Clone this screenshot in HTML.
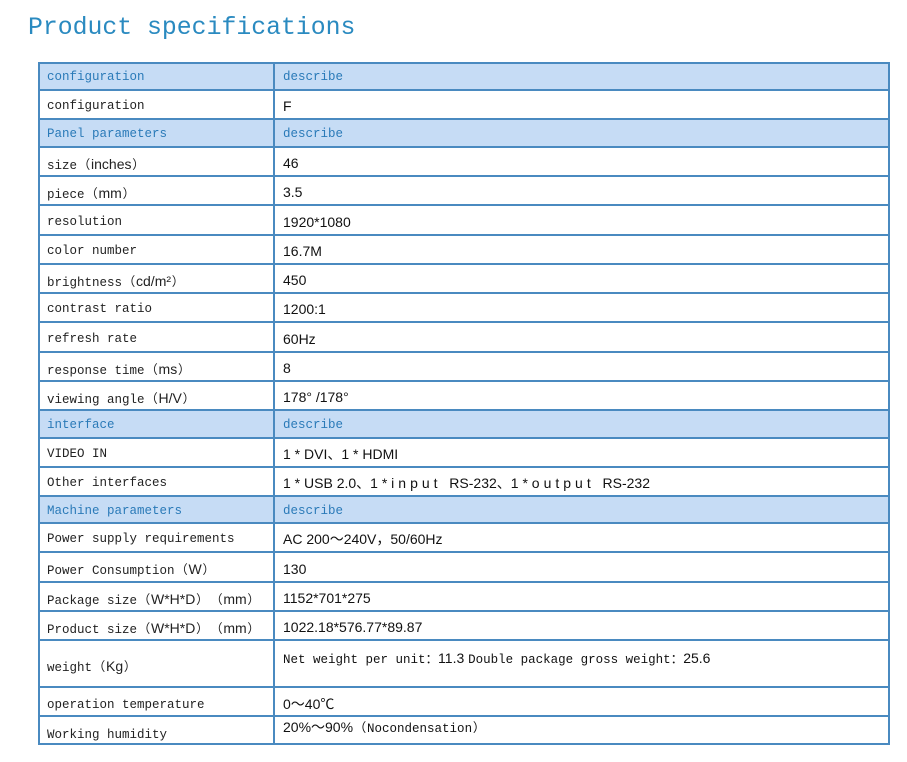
<!DOCTYPE html>
<html><head><meta charset="utf-8"><style>
body{margin:0;width:907px;height:762px;background:#fff;position:relative;overflow:hidden}
h1{position:absolute;left:28px;top:14px;margin:0;font:24.8px "Liberation Mono","Noto Sans CJK SC",monospace;color:#2a8ac0;font-weight:normal;letter-spacing:0}
.r{position:absolute;left:38px;width:852px;box-sizing:border-box}
.c{position:absolute;top:0;bottom:0;display:flex;align-items:center;box-sizing:border-box;white-space:nowrap;padding-top:3px}
.l{left:0;width:236px;padding-left:9px;font:12.5px "Liberation Mono","Noto Sans CJK SC",monospace;color:#222}
.v{left:236px;right:0;padding-left:9px;font:14px "Liberation Sans","Noto Sans CJK SC",sans-serif;color:#111}
.h{background:#c6dcf5}
.h .c{font:12.5px "Liberation Mono","Noto Sans CJK SC",monospace;color:#2a7ab8;padding-top:2px}
.s{font-family:"Liberation Sans","Noto Sans CJK SC",sans-serif;font-size:14px}
.m{font-family:"Liberation Mono","Noto Sans CJK SC",monospace;font-size:12.5px}
.p{display:inline-block;width:14px;text-align:center}
#grid{position:absolute;left:38px;top:62px;width:852px;height:683px;border:2px solid #4a8ac0;box-sizing:border-box;pointer-events:none}
.hl{position:absolute;left:38px;width:852px;height:2px;background:#4a8ac0}
.vl{position:absolute;left:273px;top:62px;width:2px;height:683px;background:#4a8ac0}
</style></head><body>
<h1>Product specifications</h1>

<div class="r h" style="top:62px;height:28px"><div class="c l"><span>configuration</span></div><div class="c v"><span>describe</span></div></div>
<div class="r" style="top:90px;height:29px"><div class="c l"><span>configuration</span></div><div class="c v"><span>F</span></div></div>
<div class="r h" style="top:119px;height:28px"><div class="c l"><span>Panel parameters</span></div><div class="c v"><span>describe</span></div></div>
<div class="r" style="top:147px;height:29px"><div class="c l"><span>size<span class="p">（</span><span class="s">inches</span><span class="p">）</span></span></div><div class="c v"><span>46</span></div></div>
<div class="r" style="top:176px;height:29px"><div class="c l"><span>piece<span class="p">（</span><span class="s">mm</span><span class="p">）</span></span></div><div class="c v"><span>3.5</span></div></div>
<div class="r" style="top:205px;height:30px"><div class="c l"><span>resolution</span></div><div class="c v"><span>1920*1080</span></div></div>
<div class="r" style="top:235px;height:29px"><div class="c l"><span>color number</span></div><div class="c v"><span>16.7M</span></div></div>
<div class="r" style="top:264px;height:29px"><div class="c l"><span>brightness<span class="p">（</span><span class="s">cd/m²</span><span class="p">）</span></span></div><div class="c v"><span>450</span></div></div>
<div class="r" style="top:293px;height:29px"><div class="c l"><span>contrast ratio</span></div><div class="c v"><span>1200:1</span></div></div>
<div class="r" style="top:322px;height:30px"><div class="c l"><span>refresh rate</span></div><div class="c v"><span>60Hz</span></div></div>
<div class="r" style="top:352px;height:29px"><div class="c l"><span>response time<span class="p">（</span><span class="s">ms</span><span class="p">）</span></span></div><div class="c v"><span>8</span></div></div>
<div class="r" style="top:381px;height:29px"><div class="c l"><span>viewing angle<span class="p">（</span><span class="s">H/V</span><span class="p">）</span></span></div><div class="c v"><span>178° /178°</span></div></div>
<div class="r h" style="top:410px;height:28px"><div class="c l"><span>interface</span></div><div class="c v"><span>describe</span></div></div>
<div class="r" style="top:438px;height:29px"><div class="c l"><span>VIDEO IN</span></div><div class="c v"><span>1 * DVI、1 * HDMI</span></div></div>
<div class="r" style="top:467px;height:29px"><div class="c l"><span>Other interfaces</span></div><div class="c v"><span>1 * USB 2.0、1 * <span style="letter-spacing:4px">input</span>&nbsp; RS-232、1 * <span style="letter-spacing:4px">output</span>&nbsp; RS-232</span></div></div>
<div class="r h" style="top:496px;height:27px"><div class="c l"><span>Machine parameters</span></div><div class="c v"><span>describe</span></div></div>
<div class="r" style="top:523px;height:29px"><div class="c l"><span>Power supply requirements</span></div><div class="c v"><span>AC 200～240V，50/60Hz</span></div></div>
<div class="r" style="top:552px;height:30px"><div class="c l"><span>Power Consumption<span class="p">（</span><span class="s">W</span><span class="p">）</span></span></div><div class="c v"><span>130</span></div></div>
<div class="r" style="top:582px;height:29px"><div class="c l"><span>Package size<span class="p">（</span><span class="s">W*H*D</span><span class="p">）</span><span class="p">（</span><span class="s">mm</span><span class="p">）</span></span></div><div class="c v"><span>1152*701*275</span></div></div>
<div class="r" style="top:611px;height:29px"><div class="c l"><span>Product size<span class="p">（</span><span class="s">W*H*D</span><span class="p">）</span><span class="p">（</span><span class="s">mm</span><span class="p">）</span></span></div><div class="c v"><span>1022.18*576.77*89.87</span></div></div>
<div class="r" style="top:640px;height:47px"><div class="c l"><span>weight<span class="p">（</span><span class="s">Kg</span><span class="p">）</span></span></div><div class="c v" style="align-items:flex-start;padding-top:8px"><span><span class="m">Net weight per unit：</span>11.3 <span class="m">Double package gross weight：</span>25.6</span></div></div>
<div class="r" style="top:687px;height:29px"><div class="c l" style="padding-top:7px"><span>operation temperature</span></div><div class="c v" style="padding-top:5px"><span>0～40℃</span></div></div>
<div class="r" style="top:716px;height:29px"><div class="c l" style="padding-top:9px"><span>Working humidity</span></div><div class="c v" style="align-items:flex-start;padding-top:1px"><span>20%～90%<span class="m"><span class="p">（</span>Nocondensation<span class="p">）</span></span></span></div></div>

<div class="vl"></div>
<div class="hl" style="top:89px"></div><div class="hl" style="top:118px"></div><div class="hl" style="top:146px"></div>
<div class="hl" style="top:175px"></div><div class="hl" style="top:204px"></div><div class="hl" style="top:234px"></div>
<div class="hl" style="top:263px"></div><div class="hl" style="top:292px"></div><div class="hl" style="top:321px"></div>
<div class="hl" style="top:351px"></div><div class="hl" style="top:380px"></div><div class="hl" style="top:409px"></div>
<div class="hl" style="top:437px"></div><div class="hl" style="top:466px"></div><div class="hl" style="top:495px"></div>
<div class="hl" style="top:522px"></div><div class="hl" style="top:551px"></div><div class="hl" style="top:581px"></div>
<div class="hl" style="top:610px"></div><div class="hl" style="top:639px"></div><div class="hl" style="top:686px"></div>
<div class="hl" style="top:715px"></div>
<div id="grid"></div>
</body></html>
